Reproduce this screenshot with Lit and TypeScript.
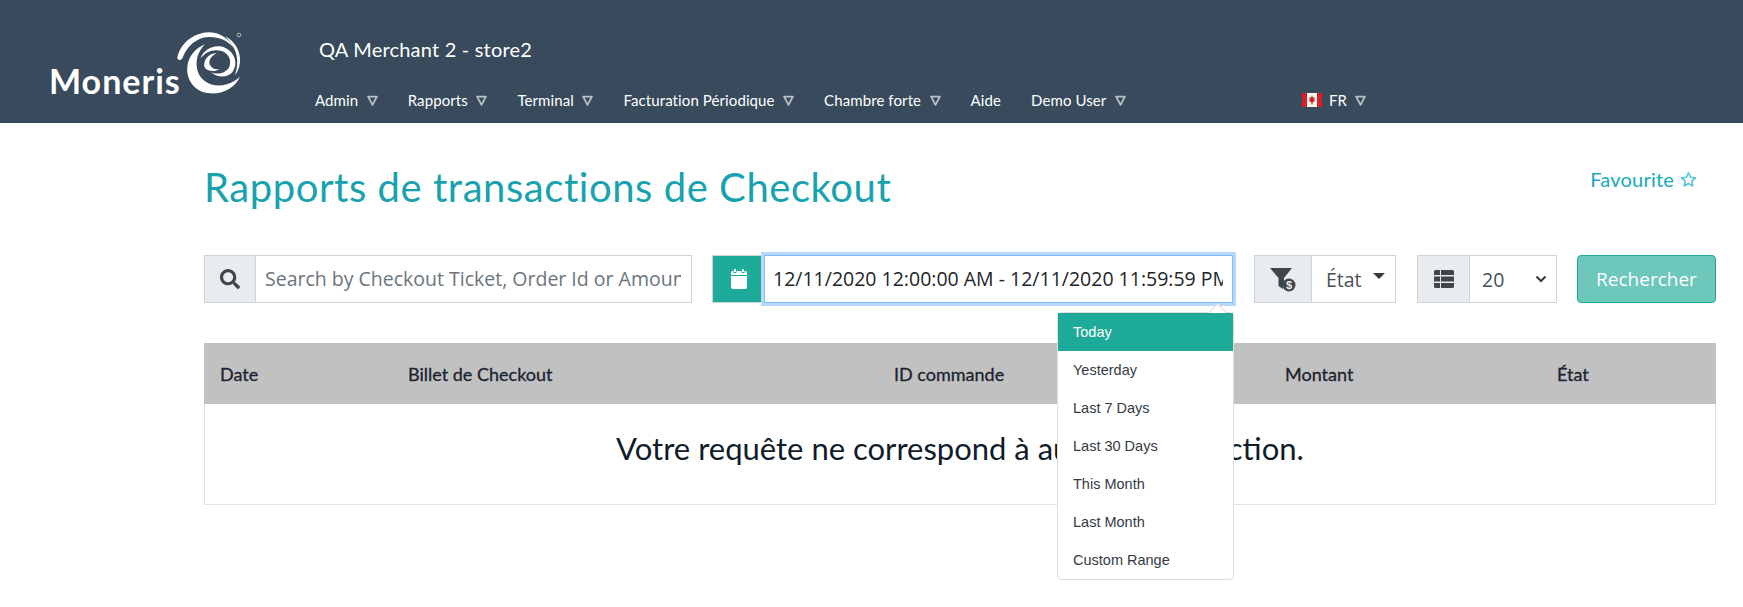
import { LitElement, html, css, svg } from "lit";
import { customElement } from "lit/decorators.js";

const tri = html`<svg class="tri" viewBox="0 0 10 10" width="11" height="11"><path d="M1 1.500H9L5 9Z" fill="none" stroke="#b9c2c9" stroke-width="1.600" stroke-linejoin="round"/></svg>`;

const navItems: [string, boolean][] = [
  ["Admin", true],
  ["Rapports", true],
  ["Terminal", true],
  ["Facturation Périodique", true],
  ["Chambre forte", true],
  ["Aide", false],
  ["Demo User", true],
];

const ranges = ["Today", "Yesterday", "Last 7 Days", "Last 30 Days", "This Month", "Last Month", "Custom Range"];
const cols = ["Date", "Billet de Checkout", "ID commande", "Montant", "État"];

@customElement("app-root")
export class AppRoot extends LitElement {
  static styles = css`
    :host { display: block; width: 1743px; height: 607px; overflow: hidden; background: #fff; font-family: "Lato", "Open Sans", sans-serif; color: #111c2b; }
    header { height: 123px; background: #384a5c; display: flex; color: #fff; }
    .logo { width: 315px; flex: none; padding: 30px 0 0 49px; box-sizing: border-box; }
    .logo-inner { position: relative; width: 195px; height: 68px; }
    .logo-inner svg { position: absolute; left: 0; top: 0; }
    .logo-word { position: absolute; left: 0; top: 32px; font: 700 34px/38px "Lato", sans-serif; letter-spacing: 1px; color: #fff; }
    .head-main { flex: 1; display: flex; flex-direction: column; }
    .merchant { font-size: 20px; line-height: 24px; margin: 37px 0 0 4px; letter-spacing: 0.2px; }
    nav { display: flex; align-items: center; margin-top: 29px; font-size: 15px; line-height: 20px; letter-spacing: 0.1px; }
    .nav-item { display: flex; align-items: center; gap: 8.5px; margin-right: 30px; }
    .lang { display: flex; align-items: center; margin-left: 146px; gap: 7px; }
    .lang .tri { margin-left: 1px; }
    main { padding: 0 27px 0 204px; }
    .title-row { display: flex; justify-content: space-between; align-items: flex-start; height: 132px; }
    h1 { margin: 41px 0 0; font-weight: 400; font-size: 40px; line-height: 46px; color: #17a2ae; letter-spacing: 0.55px; }
    .fav { margin: 44px 19px 0 0; font-size: 20px; line-height: 24px; color: #17a8bd; display: flex; align-items: center; gap: 6px; letter-spacing: 0.2px; }
    .toolbar { display: flex; height: 48px; }
    .group { display: flex; height: 48px; box-sizing: border-box; border: 1px solid #ced4da; background: #fff; }
    .addon { background: #e9ecef; border-right: 1px solid #ced4da; display: flex; align-items: center; justify-content: center; flex: none; color: #3f454b; }
    .search { width: 488px; margin-right: 20px; }
    .search .addon { width: 50px; }
    .search .field { padding-left: 9px; font-size: 19.5px; line-height: 45px; color: #6c757d; white-space: nowrap; overflow: hidden; flex: 1; margin-right: 10px; font-family: "Open Sans", sans-serif; }
    .date { width: 521px; margin-right: 21px; position: relative; border: 0; }
    .date .addon { width: 51px; background: #1eaa98; border: 1px solid #ced4da; border-right: 0; }
    .date .field { flex: 1; min-width: 0; box-sizing: border-box; border: 1px solid #80bdff; box-shadow: 0 0 0 3px #b8d8fb; padding: 0 9px 0 8px; font-size: 19.5px; line-height: 45px; color: #212529; white-space: nowrap; background: #fff; position: relative; font-family: "Open Sans", sans-serif; }
    .date .clip { display: block; overflow: hidden; }
    .state { width: 142px; margin-right: 21px; }
    .state .addon { width: 56px; }
    .state .val { flex: 1; display: flex; align-items: center; padding-left: 14px; gap: 11px; font-size: 19.5px; color: #495057; font-family: "Open Sans", sans-serif; }
    .caret { width: 0; height: 0; border-left: 6px solid transparent; border-right: 6px solid transparent; border-top: 6px solid #343a40; margin-top: -6px; }
    .page { width: 140px; margin-right: 20px; }
    .page .addon { width: 51px; }
    .page .val { flex: 1; display: flex; align-items: center; justify-content: space-between; padding: 0 9px 0 12px; font-size: 19.5px; color: #495057; font-family: "Open Sans", sans-serif; }
    button { width: 139px; height: 48px; box-sizing: border-box; border: 1px solid #1eaa98; border-radius: 4px; background: #6dc7bb; color: #fff; font: 400 19px "Open Sans", sans-serif; padding: 0; }
    .table { margin-top: 40px; width: 1512px; height: 162px; box-sizing: border-box; border: 1px solid #dee2e6; border-top: 0; }
    .thead { height: 61px; background: #c1c1c1; position: relative; margin: 0 -1px; display: grid; grid-template-columns: 188px 486px 391px 272px 1fr; padding-left: 16px; align-items: center; font-size: 18px; color: #1b2430; }
    .thead span { font-weight: 400; -webkit-text-stroke: 0.3px #1b2430; }
    .empty { height: 100px; box-sizing: border-box; padding-bottom: 12px; display: flex; align-items: center; justify-content: center; font-size: 31px; color: #111c2b; }
    .menu { position: absolute; left: 1057px; top: 312px; width: 177px; box-sizing: border-box; background: #fff; border: 1px solid #ddd; border-radius: 4px; overflow: visible; font: 14.5px/38px "Liberation Sans", Arial, sans-serif; color: #333a44; }
    .menu::before { content: ""; position: absolute; right: 9px; top: -7px; width: 12px; height: 12px; background: #fff; border-left: 1px solid #ddd; border-top: 1px solid #ddd; transform: rotate(45deg); }
    .menu div { height: 38px; padding-left: 15px; position: relative; }
    .menu div.active { background: #1eaa98; color: #fff; }
  `;

  render() {
    return html`
      <header>
        <div class="logo">
          <div class="logo-inner">
            <svg width="195" height="68" viewBox="0 0 195 68">
              ${svg`
              <g transform="translate(111 -5) scale(.3333)" fill="#fff">
                <path d="M52 100C58 60 95 25 145 22C180 22 205 40 222 68C200 45 175 35 145 36C110 38 82 62 68 98C64 106 54 108 52 100Z"/>
                <path d="M240 155C225 190 185 208 150 205C105 202 78 165 82 125C85 95 105 70 135 58C115 78 105 105 112 135C120 170 160 190 200 178C215 173 230 165 240 155Z"/>
                <path d="M122 100C130 72 165 55 195 68C225 82 235 115 218 140C205 158 175 160 152 142C172 150 198 145 208 125C216 105 205 85 185 78C160 70 135 82 122 100Z"/>
                <path d="M133 125C130 105 145 85 170 84C150 95 145 110 150 120C156 130 165 135 178 132C165 142 140 140 133 125Z"/>
                <path d="M195 33C225 48 243 80 240 112C238 130 232 142 225 150C234 125 235 95 222 70C215 55 205 43 195 33Z"/>
                <circle cx="237" cy="30" r="5.500" fill="none" stroke="#aeb8c0" stroke-width="3"/>
              </g>
              `}
            </svg>
            <span class="logo-word">Moneris</span>
          </div>
        </div>
        <div class="head-main">
          <div class="merchant">QA Merchant 2 - store2</div>
          <nav>
            ${navItems.map(([t, c]) => html`<span class="nav-item">${t}${c ? tri : ""}</span>`)}
            <span class="lang">
              <svg width="20" height="14" viewBox="0 0 20 14"><rect width="20" height="14" rx="1" fill="#f4f4f4"/><rect width="5" height="14" fill="#d5202a"/><rect x="15" width="5" height="14" fill="#d5202a"/><path d="M10 2.500L11 4.800L12.800 4.300L12.200 6.800L13.200 7.500L10.600 9.500V11.300H9.400V9.500L6.800 7.500L7.800 6.800L7.200 4.300L9 4.800Z" fill="#d5202a"/></svg>
              FR ${tri}
            </span>
          </nav>
        </div>
      </header>
      <main>
        <div class="title-row">
          <h1>Rapports de transactions de Checkout</h1>
          <div class="fav">Favourite
            <svg width="17" height="17" viewBox="0 0 24 24"><path d="M12 2.500L14.900 8.800L21.800 9.600L16.700 14.300L18.100 21.100L12 17.700L5.900 21.100L7.300 14.300L2.200 9.600L9.100 8.800Z" fill="none" stroke="#5cc6d6" stroke-width="2.400" stroke-linejoin="round"/></svg>
          </div>
        </div>
        <div class="toolbar">
          <div class="group search">
            <div class="addon"><svg width="20" height="20" viewBox="0 0 512 512"><path fill="#3f454b" d="M505 442.700L405.300 343c-4.500-4.500-10.600-7-17-7H372c27.600-35.300 44-79.700 44-128C416 93.100 322.900 0 208 0S0 93.100 0 208s93.100 208 208 208c48.300 0 92.700-16.400 128-44v16.300c0 6.400 2.500 12.500 7 17l99.700 99.700c9.400 9.400 24.600 9.400 33.900 0l28.300-28.300c9.400-9.400 9.400-24.600.1-34zM208 336c-70.700 0-128-57.200-128-128 0-70.700 57.200-128 128-128 70.700 0 128 57.200 128 128 0 70.700-57.200 128-128 128z"/></svg></div>
            <div class="field">Search by Checkout Ticket, Order Id or Amount</div>
          </div>
          <div class="group date">
            <div class="addon"><svg width="18" height="22" viewBox="0 0 18 22"><path fill="#fff" d="M4 1h2v3H4zM12 1h2v3h-2zM2.500 3H3.500v2h3V3h5v2h3V3h1A1.500 1.500 0 0 1 17 4.500V7H1V4.500A1.500 1.500 0 0 1 2.500 3zM1 8h16v11a2 2 0 0 1-2 2H3a2 2 0 0 1-2-2z"/></svg></div>
            <div class="field"><span class="clip">12/11/2020 12:00:00 AM - 12/11/2020 11:59:59 PM</span></div>
          </div>
          <div class="group state">
            <div class="addon"><svg width="28" height="25" viewBox="0 0 28 25"><path fill="#3f454b" d="M1 1H23L15 11V16A6.500 6.500 0 0 0 14.500 22.500L9.500 19V11Z"/><circle cx="20" cy="18" r="6.500" fill="#3f454b"/><text x="20" y="22" text-anchor="middle" font-size="11" font-family="Liberation Sans" font-weight="700" fill="#e9ecef">$</text></svg></div>
            <div class="val">État <span class="caret"></span></div>
          </div>
          <div class="group page">
            <div class="addon"><svg width="20" height="18" viewBox="0 0 20 18"><path fill="#3f454b" d="M0 1.500A1.500 1.500 0 0 1 1.500 0H6v5H0zM7 0h11.500A1.500 1.500 0 0 1 20 1.500V5H7zM0 6.500h6v5H0zM7 6.500h13v5H7zM0 13h6v5H1.500A1.500 1.500 0 0 1 0 16.500zM7 13h13v3.500a1.500 1.500 0 0 1-1.500 1.500H7z"/></svg></div>
            <div class="val">20 <svg width="12" height="8" viewBox="0 0 12 8"><path d="M1.500 1.500L6 6L10.500 1.500" fill="none" stroke="#343a40" stroke-width="2"/></svg></div>
          </div>
          <button>Rechercher</button>
        </div>
        <div class="table">
          <div class="thead">${cols.map((c) => html`<span>${c}</span>`)}</div>
          <div class="empty">Votre requête ne correspond à aucune transaction.</div>
        </div>
      </main>
      <div class="menu">
        ${ranges.map((r, i) => html`<div class=${i === 0 ? "active" : ""}>${r}</div>`)}
      </div>
    `;
  }
}
